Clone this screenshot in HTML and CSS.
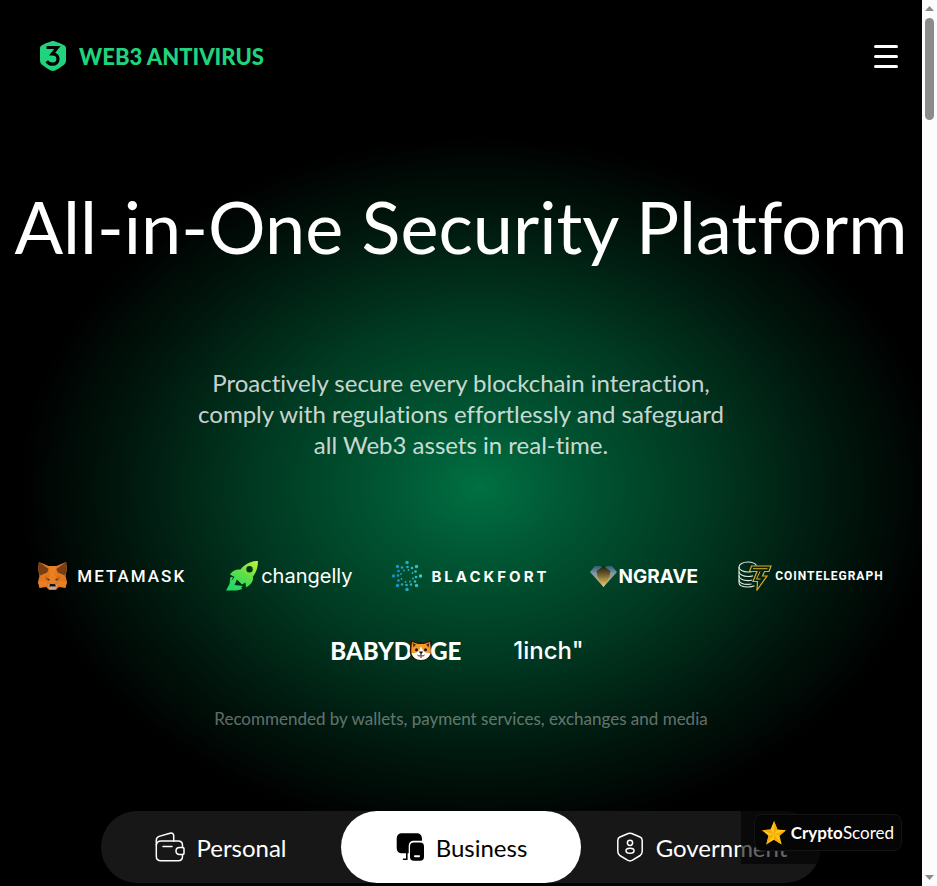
FILE: index.html
```html
<!DOCTYPE html>
<html lang="en">
<head>
  <meta charset="UTF-8" />
  <meta name="viewport" content="width=device-width, initial-scale=1" />
  <title>Web3 Antivirus</title>
  <link rel="stylesheet" href="styles.css">
</head>
<body>
  <div class="page">
    <header class="header">
      <a class="brand" href="#">
        <svg class="brand-icon" width="26" height="30" viewBox="0 0 26 30" aria-hidden="true">
          <path fill="#1fd47c" d="M13 0c2 0 7.500 2.500 11 4.200 1.300.7 2 1.600 2 3v12c0 2.400-1 4-3 5.300-3 2.200-7.500 5.500-10 5.500s-7-3.300-10-5.500c-2-1.300-3-2.900-3-5.300v-12c0-1.400.7-2.300 2-3C5.500 2.500 11 0 13 0z"/>
          <path fill="none" stroke="#000" stroke-width="3.200" d="M6.500 6.500h10.800l-5 6.500c3.700 0 5.700 2 5.700 5s-2.200 5.200-5.500 5.200c-2.500 0-4.300-1-5.800-3"/>
        </svg>
        <span class="brand-name">WEB3 ANTIVIRUS</span>
      </a>
      <button class="menu" type="button" aria-label="Menu">
        <span></span>
        <span></span>
        <span></span>
      </button>
    </header>

    <main class="hero">
      <h1 class="title">All-in-One Security Platform</h1>
      <p class="lead">Proactively secure every blockchain interaction, comply with regulations effortlessly and safeguard all Web3 assets in real-time.</p>

      <!-- Partner logos -->
      <ul class="partners">
        <li class="partner metamask">
          <svg width="29" height="28" viewBox="0 0 30 28" preserveAspectRatio="none" aria-hidden="true">
            <path fill="#e2761b" d="M1 0l10 4h8l10-4 1 7-1.500 7 1.500 6-1.500 6-7-1-3 3h-7l-3-3-7 1L0 20l1.500-6L0 7z"/>
            <path fill="#763d16" d="M1 0l10 7-1.500 3.500-7.500 3L0 7zM29 0L19 7l1.500 3.500 7.500 3 2-6.500z"/>
            <path fill="#e98024" d="M11 4h8l-1.500 9 2 7-4.500 2-4.500-2 2-7zM0 20l8.500-1 1 4-7.500 2.500zM30 20l-8.500-1-1 4 7.500 2.500z"/>
            <path fill="#cd6116" d="M8.500 19L7 14l5 2.500zM21.500 19l1.500-5-5 2.500z"/>
            <path fill="#233447" d="M8.500 16.500l3.500.8-.5 1.700zM21.500 16.500l-3.500.8.5 1.700z"/>
            <path fill="#c0ad9e" d="M10 23l2-1h6l2 1-2 4h-6z"/>
            <path fill="#161616" d="M12.300 22h5.400l.8 2.500h-7z"/>
          </svg>
          <span>METAMASK</span>
        </li>
        <li class="partner changelly">
          <svg width="32" height="30" viewBox="0 0 32 30" aria-hidden="true">
            <defs>
              <linearGradient id="rocket" x1="1" y1="0" x2="0.300" y2="1">
                <stop offset="0" stop-color="#c6f135"/>
                <stop offset="0.500" stop-color="#5fdf45"/>
                <stop offset="1" stop-color="#22d866"/>
              </linearGradient>
            </defs>
            <path fill="url(#rocket)" fill-rule="evenodd" d="M32 0c0 6-1.500 11-5 15.500.5 5-2 8-7 11l-.5-5-3.500 2-5-5-2.500 5.500 8.500 1-2 1.500 1.500 1.500-6 1.500H0l3.500-6.500 1-7h2.500l-1.500 4 3-4-4.500-2.500c2.500-4 6-5.500 10.500-5C18.500 3.500 24.500 0 32 0zM23.500 5a3.200 3.200 0 1 0 0 6.400 3.200 3.200 0 1 0 0-6.400z"/>
          </svg>
          <span>changelly</span>
        </li>
        <li class="partner blackfort">
          <svg width="30" height="30" viewBox="-15 -15 30 30" aria-hidden="true">
            <defs>
              <linearGradient id="dots" gradientUnits="userSpaceOnUse" x1="-15" y1="0" x2="15" y2="0">
                <stop offset="0" stop-color="#1688c9"/>
                <stop offset="1" stop-color="#35ceca"/>
              </linearGradient>
            </defs>
            <g fill="url(#dots)">
              <circle cx="0" cy="-13.500" r="1.700"/>
              <circle cx="9.500" cy="-9.500" r="1.700"/>
              <circle cx="13.500" cy="0" r="1.700"/>
              <circle cx="9.500" cy="9.500" r="1.700"/>
              <circle cx="0" cy="13.500" r="1.700"/>
              <circle cx="-9.500" cy="9.500" r="1.700"/>
              <circle cx="-13.500" cy="0" r="1.700"/>
              <circle cx="-9.500" cy="-9.500" r="1.700"/>
              <circle cx="0.500" cy="-9" r="1.300"/>
              <circle cx="5" cy="-8" r="1.300"/>
              <circle cx="8.500" cy="-4.500" r="1.300"/>
              <circle cx="9" cy="1" r="1.300"/>
              <circle cx="8" cy="5.500" r="1.300"/>
              <circle cx="4" cy="8.500" r="1.300"/>
              <circle cx="-0.500" cy="9" r="1.300"/>
              <circle cx="-5" cy="8.500" r="1.300"/>
              <circle cx="-8.500" cy="4.500" r="1.300"/>
              <circle cx="-9" cy="-0.500" r="1.300"/>
              <circle cx="-8.500" cy="-5" r="1.300"/>
              <circle cx="-5" cy="-8.500" r="1.300"/>
              <circle cx="1.500" cy="-6" r="0.900"/>
              <circle cx="5.500" cy="-3" r="0.900"/>
              <circle cx="6" cy="2.500" r="0.900"/>
              <circle cx="3" cy="5.500" r="0.900"/>
              <circle cx="-1.500" cy="6" r="0.900"/>
              <circle cx="-5.500" cy="3" r="0.900"/>
              <circle cx="-6" cy="-2" r="0.900"/>
              <circle cx="-3" cy="-5.500" r="0.900"/>
            </g>
          </svg>
          <span>BLACKFORT</span>
        </li>
        <li class="partner ngrave">
          <svg width="27" height="21" viewBox="0 0 27 21" aria-hidden="true">
            <defs>
              <linearGradient id="gem-wing" x1="0" y1="0" x2="0" y2="1">
                <stop offset="0" stop-color="#2d5c74"/>
                <stop offset="0.350" stop-color="#7f99a6"/>
                <stop offset="1" stop-color="#d9b64e"/>
              </linearGradient>
              <linearGradient id="gem-core" x1="0" y1="0" x2="0" y2="1">
                <stop offset="0" stop-color="#1c1a12"/>
                <stop offset="0.450" stop-color="#7a642f"/>
                <stop offset="1" stop-color="#f4d673"/>
              </linearGradient>
            </defs>
            <path fill="url(#gem-wing)" d="M5 0h5l3.500 2L17 0h5l5 6-13.500 15L0 6z"/>
            <path fill="url(#gem-core)" d="M13.500 0l7 5-1 5.500-6 10.500-6-10.500-1-5.500z"/>
          </svg>
          <span>NGRAVE</span>
        </li>
        <li class="partner cointelegraph">
          <svg width="34" height="30" viewBox="0 0 34 30" fill="none" aria-hidden="true">
            <g stroke="#dce6e0" stroke-width="1.100">
              <path d="M18.500 4.500C17 2.300 14 1 10 1 4.800 1 1 3.300 1 6s3.800 5 9 5c1.400 0 2.500-.1 3.500-.4"/>
              <path d="M1 6v4.500c0 2.700 3.800 5 9 5 2 0 3.700-.3 5-.8"/>
              <path d="M1 10.500V15c0 2.600 3.800 4.600 9 4.600 1.700 0 3-.2 4.300-.6"/>
              <path d="M1 14.500V19c0 2.500 3.800 4.400 9 4.400 1.300 0 2.500-.1 3.500-.4"/>
              <path d="M1 18.500v3.300C1 24.300 4.800 26 10 26c2.500 0 4.800-.4 6.500-1.200"/>
            </g>
            <path stroke="#e0a928" stroke-width="1.200" d="M13.500 5h19.500l-2 5.500h-4.500l-2 4.500h4.500l-10 14 .5-8.500h-4.500l4-10h-7.500z"/>
            <path stroke="#e0a928" stroke-width="1" d="M15 7.700h14.500M22 10.500l-3.500 7.500h4"/>
          </svg>
          <span>COINTELEGRAPH</span>
        </li>
        <li class="partner babydoge">
          <span>BABYD</span>
          <svg width="24" height="22" viewBox="0 0 24 22" aria-hidden="true">
            <path fill="#2b1708" d="M1.500 1l7 2.500h7l7-2.500.8 11c0 6-5 9.500-11.300 9.500S.7 18 .7 12z"/>
            <path fill="#f39a28" d="M3 3l6 2h6l6-2 .8 9c0 5-4.300 8.500-9.800 8.500S2.200 17 2.200 12z"/>
            <path fill="#fff" d="M2.500 14c2.500.5 4.500 0 6.500-1.500l2-2.500 1-3 1 3 2 2.500c2 1.500 4 2 6.500 1.500-1 4.200-4.600 7-9.500 7s-8.500-2.800-9.500-7z"/>
            <path fill="#5a2d0e" d="M3.500 4l3.500 1.500-2.500 3zM20.500 4L17 5.500l2.500 3z"/>
            <circle cx="7.500" cy="10.800" r="1.500" fill="#21130b"/>
            <circle cx="16.500" cy="10.800" r="1.500" fill="#21130b"/>
            <path fill="#111" d="M9.800 12.500h4.400L12 15.500z"/>
            <path fill="none" stroke="#111" d="M8.500 16c1.500 1.500 3 1 3.500-.5.500 1.500 2 2 3.500.5"/>
            <path fill="#ef5a5a" d="M11 17h2v2h-2z"/>
          </svg>
          <span>GE</span>
        </li>
        <li class="partner oneinch"><span>1inch"</span></li>
      </ul>
      <p class="note">Recommended by wallets, payment services, exchanges and media</p>

      <div class="tabs" role="tablist">
        <button class="tab" type="button" role="tab" aria-selected="false">
          <svg width="30" height="30" viewBox="0 0 30 30" fill="none" stroke="#fff" stroke-width="1.500" stroke-linecap="round" stroke-linejoin="round" aria-hidden="true">
            <path d="M27.500 15.500v-2.200c0-2.600-1.500-4.300-4.300-4.300H6C3 9 1.300 10.700 1.300 13.500v10.700C1.300 27 3 28.700 6 28.700h17.200c2.800 0 4.300-1.700 4.300-4.500v-1.700"/>
            <path d="M1.300 13V8.200c0-1.900 1-3.100 2.800-3.800L15 1.300c2-.6 3.700.4 3.700 2.300V9"/>
            <path d="M29 16.800v4.400c0 .7-.5 1.200-1.200 1.200h-3.300c-2 0-3.500-1.400-3.500-3.400s1.500-3.400 3.500-3.400h3.300c.7 0 1.200.5 1.200 1.200z"/>
            <path d="M8 14.500h9"/>
          </svg>
          <span>Personal</span>
        </button>
        <button class="tab active" type="button" role="tab" aria-selected="true">
          <svg width="30" height="30" viewBox="0 0 30 30" aria-hidden="true">
            <path d="M7.500 1.200h13.700c4 0 5.800 1.800 5.800 5.800v1.800h-7.500c-4 0-5.800 1.800-5.800 5.800v6.700H7.500c-4 0-5.800-1.800-5.800-5.800V7c0-4 1.800-5.800 5.800-5.800z"/>
            <path fill="none" stroke="#000" stroke-width="1.600" stroke-linecap="round" d="M11.800 21v6M8.500 27.300h3.500"/>
            <path fill-rule="evenodd" d="M19 10.500h6c2.800 0 4 1.200 4 4v10.300c0 2.800-1.200 4-4 4h-6c-2.800 0-4-1.200-4-4V14.500c0-2.800 1.200-4 4-4zm.8 12.800c-1.200 0-1.200 1.900 0 1.900h4.400c1.200 0 1.200-1.900 0-1.900z"/>
          </svg>
          <span>Business</span>
        </button>
        <button class="tab" type="button" role="tab" aria-selected="false">
          <svg width="30" height="30" viewBox="0 0 30 30" fill="none" stroke="#fff" stroke-width="1.500" stroke-linejoin="round" aria-hidden="true">
            <path d="M13.300 1.500L5 5C3.300 5.700 2.800 6.800 2.800 8.500v10.800c0 1.700.5 3 2 4.200l7.700 4.700c1.800 1 3.200 1 5 0l7.700-4.700c1.500-1.200 2-2.500 2-4.200V8.500c0-1.700-.5-2.800-2.200-3.500l-8.300-3.500c-1.200-.5-2.200-.5-3.400 0z"/>
            <circle cx="15" cy="10.800" r="2.600"/>
            <ellipse cx="15" cy="18.800" rx="4" ry="2.500"/>
          </svg>
          <span>Government</span>
        </button>
      </div>
    </main>

    <div class="widget">
      <a class="badge" href="#">
        <svg width="24" height="24" viewBox="0 0 24 24" aria-hidden="true">
          <path fill="#ffc814" d="M12 0l3.500 8.500 8.500.7-6.500 5.600 2.200 8.700L12 18.800l-7.700 4.700 2.200-8.700L0 9.200l8.500-.7z"/>
          <path fill="#f5a80b" d="M12 13.500L24 9.200l-6.500 5.600zM12 13.500l7.700 10L12 18.800zM12 13.500L15.500 8.500 12 0zM12 13.500l-7.700 10 2.200-8.700zM12 13.500L0 9.200l8.500-.7z"/>
        </svg>
        <span><b>Crypto</b>Scored</span>
      </a>
    </div>
  </div>

  <div class="scrollbar" aria-hidden="true">
    <svg width="9" height="5" viewBox="0 0 9 5"><path fill="#8b8b8b" d="M4.500 0L9 5H0z"/></svg>
    <div class="thumb"></div>
    <svg width="9" height="5" viewBox="0 0 9 5"><path fill="#8b8b8b" d="M0 0h9L4.500 5z"/></svg>
  </div>
</body>
</html>
```
FILE: styles.css
```css
* {
  box-sizing: border-box;
  margin: 0;
  padding: 0;
}
body {
  display: flex;
  height: 100vh;
  overflow: hidden;
  background: #000;
  color: #fff;
  font-family: Lato, "Open Sans", sans-serif;
  font-variant-ligatures: none;
}
button {
  border: none;
  background: none;
  color: inherit;
  font: inherit;
  cursor: pointer;
}
a {
  color: inherit;
  text-decoration: none;
}

/* Page with the green glow behind the hero */
.page {
  position: relative;
  flex: 1;
  min-width: 0;
  background: radial-gradient(ellipse 460px 350px at 52% 55%, #007043 0%, #005733 20%, #003a22 48%, #001a0f 75%, #000 100%) #000;
}

/* Header */
.header {
  display: flex;
  align-items: center;
  justify-content: space-between;
  height: 112px;
  padding: 0 24px 0 40px;
}
.brand {
  display: flex;
  align-items: center;
  gap: 13px;
}
.brand-name {
  color: #1fd47c;
  font-size: 22px;
  font-weight: 900;
}
.menu {
  display: flex;
  flex-direction: column;
  justify-content: space-between;
  width: 24px;
  height: 23px;
}
.menu span {
  height: 3px;
  border-radius: 2px;
  background: #fff;
}

/* Hero */
.hero {
  display: flex;
  flex-direction: column;
  align-items: center;
  padding: 70px 12px 0;
  text-align: center;
}
.title {
  font-size: 72px;
  font-weight: 400;
  line-height: 88px;
  white-space: nowrap;
}
.lead {
  max-width: 540px;
  margin-top: 97px;
  color: rgba(255, 255, 255, 0.8);
  font-size: 24px;
  line-height: 31px;
}

/* Partners */
.partners {
  display: flex;
  flex-wrap: wrap;
  justify-content: center;
  gap: 40px;
  margin-top: 99px;
  list-style: none;
}
.partner {
  display: flex;
  align-items: center;
  height: 34px;
  white-space: nowrap;
}
.metamask {
  gap: 10px;
  font-family: Roboto, sans-serif;
  font-size: 17px;
  font-weight: 500;
  letter-spacing: 2px;
}
.changelly {
  gap: 3px;
  font-family: Inter, sans-serif;
  font-size: 20px;
}
.blackfort {
  gap: 9px;
  font-family: Inter, sans-serif;
  font-size: 15px;
  font-weight: 700;
  letter-spacing: 3px;
}
.ngrave {
  gap: 2px;
  font-family: Inter, sans-serif;
  font-size: 19px;
  font-weight: 700;
}
.cointelegraph {
  gap: 3px;
  font-family: Roboto, sans-serif;
  font-size: 12px;
  font-weight: 700;
  letter-spacing: 1px;
}
.babydoge {
  font-size: 24px;
  font-weight: 900;
}
.babydoge svg {
  margin: 0 -3px;
}
.oneinch {
  padding: 0 8px 0 12px;
  font-family: Inter, sans-serif;
  font-size: 24px;
  font-weight: 500;
}
.note {
  margin-top: 42px;
  color: rgba(255, 255, 255, 0.4);
  font-size: 17px;
  line-height: 20px;
}

/* Tabs */
.tabs {
  display: flex;
  width: 100%;
  max-width: 720px;
  margin-top: 82px;
  border-radius: 36px;
  background: #171717;
}
.tab {
  display: flex;
  flex: 1;
  align-items: center;
  justify-content: center;
  gap: 11px;
  height: 72px;
  border-radius: 36px;
  font-size: 24px;
}
.tab.active {
  background: #fff;
  color: #000;
}

/* Rating badge over the page corner */
.widget {
  position: absolute;
  right: 7px;
  bottom: 22px;
  padding: 13px;
  background: rgba(0, 0, 0, 0.6);
}
.badge {
  display: flex;
  align-items: center;
  gap: 5px;
  height: 37px;
  padding: 0 7px;
  border: 1px solid #141414;
  border-radius: 8px;
  background: #050505;
  font-size: 17px;
}

/* Scrollbar */
.scrollbar {
  display: flex;
  flex-direction: column;
  align-items: center;
  width: 15px;
  padding: 6px 0;
  background: #fcfcfc;
}
.thumb {
  width: 9px;
  height: 102px;
  margin: 7px 0 auto;
  border-radius: 5px;
  background: #8b8b8b;
}
```
